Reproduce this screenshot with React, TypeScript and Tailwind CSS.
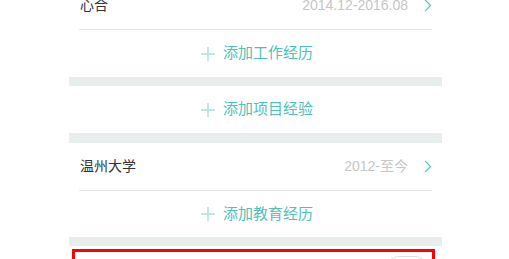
import React from 'react';

const font = { fontFamily: '"Liberation Sans", "Noto Sans CJK SC", sans-serif' };

const Chevron = () => (
  <svg width="8" height="13" viewBox="0 0 8 13" fill="none" className="ml-[16px]">
    <path d="M1 0.8 L6.6 6.5 L1 12.2" stroke="#4fc7bd" strokeWidth="1.2" />
  </svg>
);

const Plus = () => (
  <svg width="14" height="14" viewBox="0 0 14 14" className="mr-[8px]">
    <path d="M7 0 V14 M0 7 H14" stroke="#a6e0da" strokeWidth="1.4" />
  </svg>
);

const ItemRow: React.FC<{ name: string; date: string; className?: string }> = ({ name, date, className }) => (
  <div className={`flex items-center justify-between pl-[11px] pr-[10px] ${className ?? ''}`}>
    <span className="text-[14px] text-[#333333]">{name}</span>
    <div className="flex items-center">
      <span className="text-[14px] text-[#c6c6c6]">{date}</span>
      <Chevron />
    </div>
  </div>
);

const AddButton: React.FC<{ label: string; className?: string }> = ({ label, className }) => (
  <div className={`flex items-center justify-center pl-[3px] ${className ?? ''}`}>
    <Plus />
    <span className="text-[15px] text-[#4fc1b7]">{label}</span>
  </div>
);

const Gap = ({ h }: { h: string }) => <div className={`bg-[#e8eded] ${h}`} />;

export default function App() {
  return (
    <div className="w-[509px] h-[259px] overflow-hidden bg-white" style={font}>
      <div className="ml-[69px] w-[373px]">
        <ItemRow name="心合" date="2014.12-2016.08" className="h-[48px] -mt-[19px]" />
        <div className="mx-[10px] h-px bg-[#e6e6e6]" />
        <AddButton label="添加工作经历" className="h-[47px]" />
        <Gap h="h-[9px]" />
        <AddButton label="添加项目经验" className="h-[47px]" />
        <Gap h="h-[10px]" />
        <ItemRow name="温州大学" date="2012-至今" className="h-[47px]" />
        <div className="mx-[10px] h-px bg-[#e6e6e6]" />
        <AddButton label="添加教育经历" className="h-[46px]" />
        <Gap h="h-[9px]" />
        <div className="pt-[3px] pl-[3px] pr-[7px]">
          <div className="h-[40px] border-[3px] border-b-0 border-[#ff0000] bg-white flex justify-end pr-[3px] pt-[4px]">
            <div className="w-[44px] h-[28px] rounded-full border border-[#e0e0e0]" />
          </div>
        </div>
      </div>
    </div>
  );
}
